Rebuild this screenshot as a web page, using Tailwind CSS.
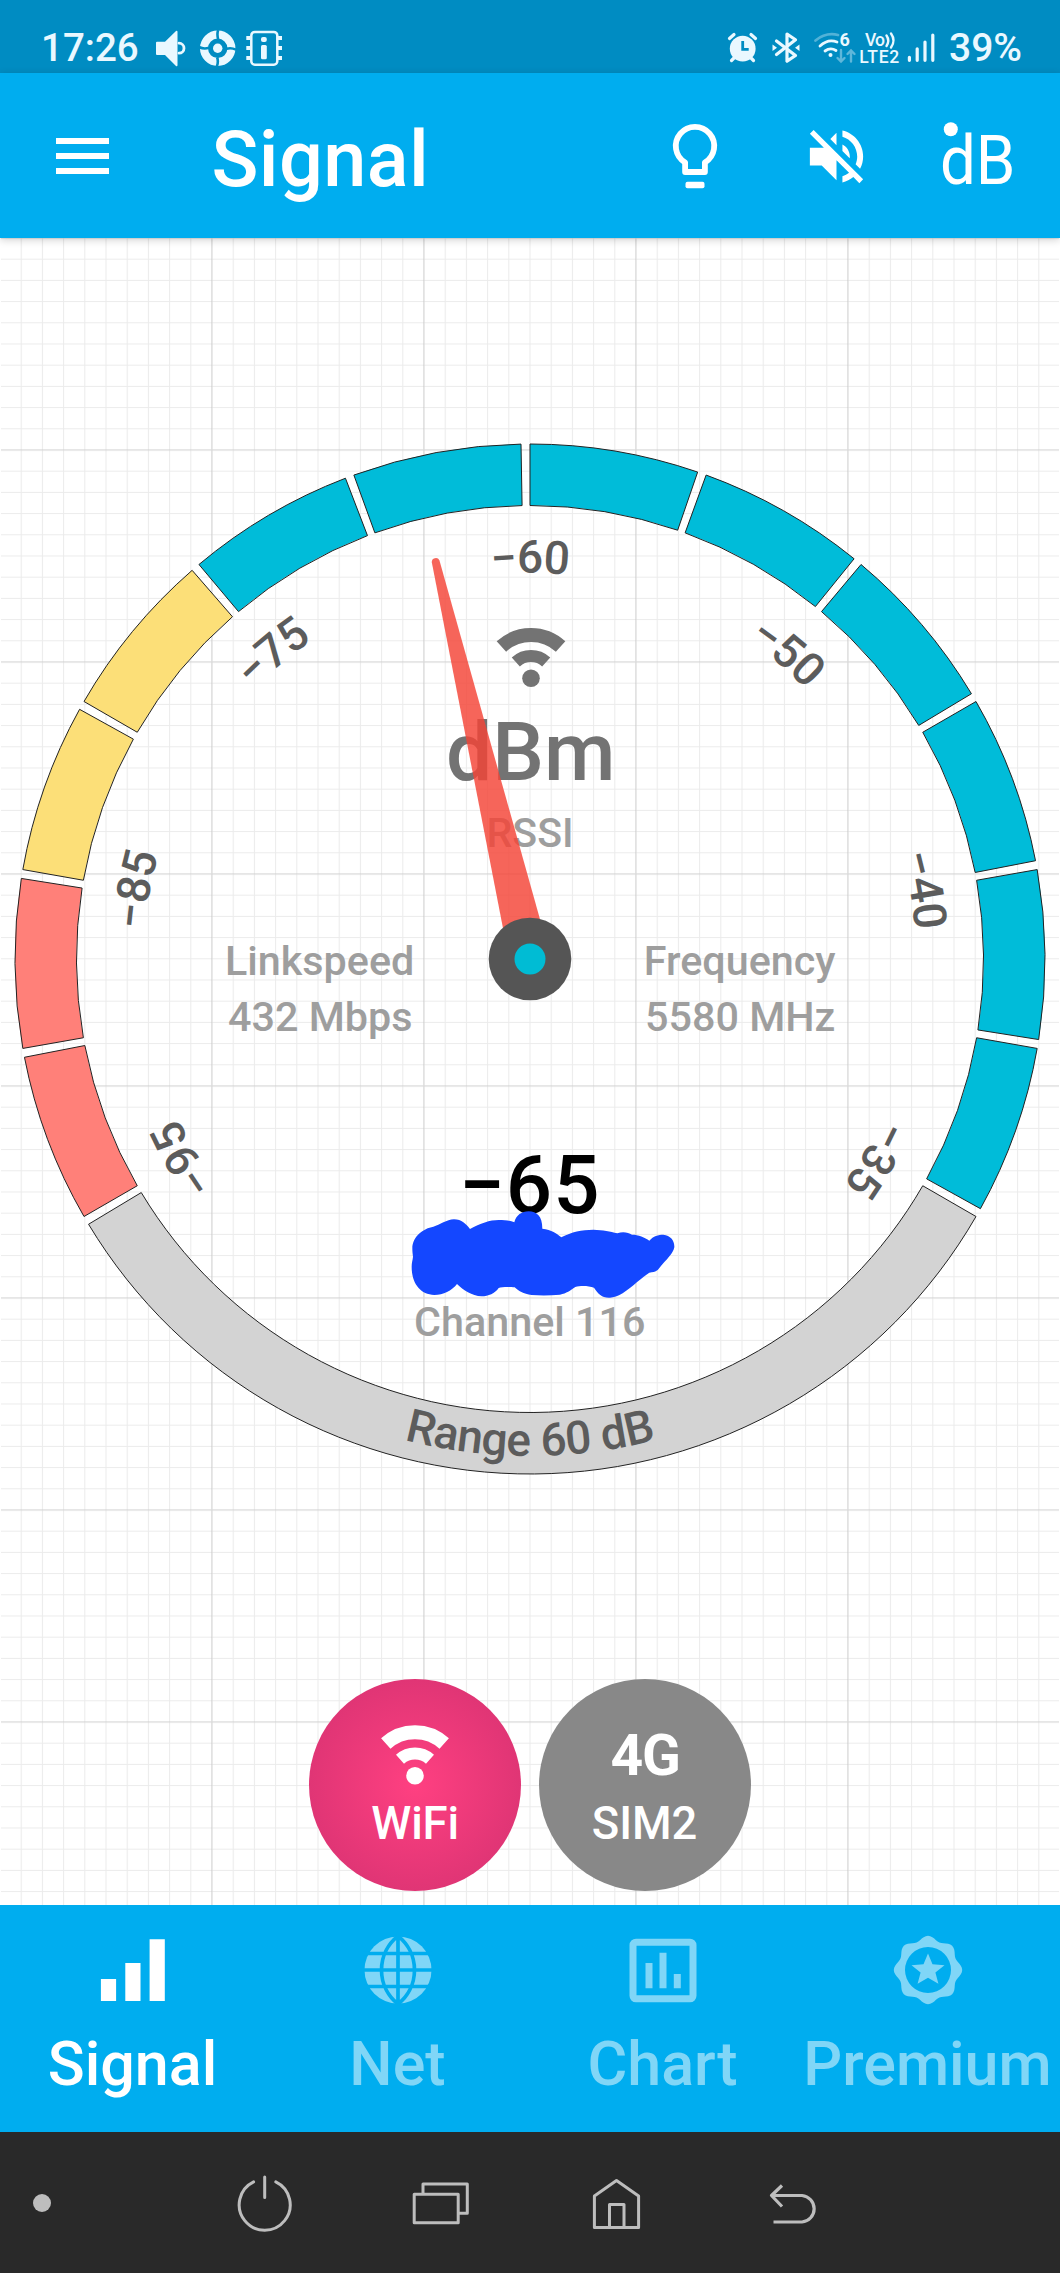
<!DOCTYPE html>
<html lang="en">
<head>
<meta charset="utf-8">
<title>Signal</title>
<script src="https://cdn.jsdelivr.net/npm/@tailwindcss/browser@4"></script>
</head>
<body class="w-[1060px] bg-white font-['Roboto',sans-serif] font-medium">
<div class="flex h-[2273px] w-[1060px] flex-col overflow-hidden">

  <!-- status bar -->
  <div class="flex h-[73px] shrink-0 items-start justify-between bg-[#008cc2] pl-[41px] pr-[38px] text-[#eaf8ff]">
    <div class="flex">
      <span class="mt-[24px] w-[98px] text-[38.5px] leading-[48px] whitespace-nowrap">17:26</span>
      <svg class="mt-[27px] ml-[17px] h-[42px] w-[30px]" viewBox="156 27 30 42" fill="currentColor">
        <path d="M157 41.700h8L176 31q1.500-.7 1.500 1V65q0 1.700-1.500 1L165 55h-8q-1 0-1-1V42.700q0-1 1-1z"/>
        <path d="M179 43.200a5 5 0 0 1 0 10" fill="none" stroke="currentColor" stroke-width="2.800" stroke-linecap="round"/>
      </svg>
      <svg class="mt-[27px] ml-[13px] h-[42px] w-[38px]" viewBox="199 27 38 42">
        <circle cx="217.700" cy="48.300" r="13.700" fill="none" stroke="currentColor" stroke-width="8"/>
        <path d="M218.200 39.500Q216.700 34 218.200 30M217.200 57.500Q218.700 62 216.700 67M209 47.800Q204 49.300 199.500 47.300M226.500 48.800Q231 47.300 236 49.600" fill="none" stroke="#008cc2" stroke-width="2.600"/>
        <circle cx="217.700" cy="48.300" r="4.700" fill="currentColor"/>
      </svg>
      <svg class="mt-[27px] ml-[8px] h-[42px] w-[38px]" viewBox="245 27 38 42" fill="currentColor">
        <rect x="251.300" y="31.900" width="26" height="32.800" rx="3.500" fill="none" stroke="currentColor" stroke-width="2.500"/>
        <path d="M246.300 36h4v4h-4zM246.300 46h4v4h-4zM246.300 56h4v4h-4zM278 36h4v4h-4zM278 46h4v4h-4zM278 56h4v4h-4z"/>
        <rect x="261" y="37" width="5.800" height="5" rx="2"/><rect x="261" y="45" width="5.800" height="14.300" rx="1.500"/>
      </svg>
    </div>
    <div class="flex">
      <svg class="mt-[27px] h-[42px] w-[34px]" viewBox="726 27 34 42">
        <g stroke="currentColor" stroke-width="3.200" stroke-linecap="round">
          <path d="M729.500 38.500l4.500-4M755.500 38.500l-4.500-4M731.500 60.500l3-3M753.500 60.500l-3-3"/>
        </g>
        <circle cx="742.700" cy="48.700" r="12.900" fill="currentColor"/>
        <path d="M742.700 41v8.300h6" fill="none" stroke="#008cc2" stroke-width="2.800"/>
      </svg>
      <svg class="mt-[27px] ml-[10px] h-[42px] w-[32px]" viewBox="770 27 32 42" fill="currentColor">
        <path d="M776.500 41L795.500 55.500 787 61.200V34L795.500 39.800 776.500 54.500" fill="none" stroke="currentColor" stroke-width="3.200" stroke-linecap="round" stroke-linejoin="round"/>
        <path d="M772.500 44.500l4.500 3.200-4.500 3.200zM799.500 44.500l-4.500 3.200 4.500 3.200z"/>
      </svg>
      <svg class="mt-[27px] ml-[10px] h-[42px] w-[46px]" viewBox="812 27 46 42">
        <g fill="none" stroke="currentColor" stroke-width="2.800" stroke-linecap="round">
          <path d="M815.500 40.500Q826 32 838 35" opacity=".35"/>
          <path d="M820 46Q828 38.500 837 42"/>
          <path d="M825 51Q830.500 47 836 50.500"/>
          <path d="M841 50v11M837.500 58l3.500 3.500 3.500-3.500M851 61.500V50.500M847.500 54l3.500-3.500 3.500 3.500" opacity=".4" stroke-width="2.400"/>
        </g>
        <circle cx="830.500" cy="55" r="2" fill="currentColor"/>
        <text x="839.500" y="46.300" font-size="18" fill="currentColor" font-weight="700">6</text>
      </svg>
      <svg class="mt-[27px] ml-[1px] h-[42px] w-[42px]" viewBox="859 27 42 42" fill="currentColor">
        <text x="865" y="45.800" font-size="17.500" textLength="20">Vo</text>
        <path d="M886.500 35.500q3.500 5 0 10.500M891 33.500q5 7 0 14" fill="none" stroke="currentColor" stroke-width="2.400" stroke-linecap="round"/>
        <text x="859.300" y="62.700" font-size="17.500" textLength="40">LTE2</text>
      </svg>
      <svg class="mt-[27px] ml-[6px] h-[42px] w-[28px]" viewBox="907 27 28 42" stroke="currentColor" stroke-width="3.200" stroke-linecap="round">
        <path d="M909.400 57.300v3M917.200 48.800v11.500M925 42v18.300M932.800 35v25.300"/>
      </svg>
      <span class="mt-[24px] ml-[14px] w-[73px] text-[39px] leading-[48px] whitespace-nowrap">39%</span>
    </div>
  </div>

  <!-- app bar -->
  <header class="z-10 flex h-[165px] shrink-0 items-start bg-[#00adef] pl-14 text-white shadow-[0_2px_8px_rgba(0,0,0,0.18)]">
    <div class="mt-[65px] flex w-[53px] flex-col gap-[9px]">
      <span class="h-1.5 bg-white"></span><span class="h-1.5 bg-white"></span><span class="h-1.5 bg-white"></span>
    </div>
    <svg class="ml-[101px] mt-[40px] h-[100px] w-[230px]" viewBox="210 113 230 100" fill="currentColor">
      <text x="211.500" y="186" font-size="77.500" letter-spacing=".4">Signal</text>
    </svg>
    <svg class="ml-[230px] mt-[47px] h-[72px] w-[50px]" viewBox="670 120 50 72" fill="none" stroke="currentColor" stroke-width="5.800">
      <path d="M704.900 172V162.500a19.200 19.200 0 1 0-19.800 0V172z" stroke-linejoin="round"/>
      <rect x="685.500" y="181.700" width="19" height="6.500" rx="2" fill="currentColor" stroke="none"/>
    </svg>
    <svg class="ml-[81px] mt-[47.500px] h-[71px] w-[71px]" viewBox="0 0 24 24" fill="currentColor">
      <path d="M16.500 12c0-1.770-1.020-3.290-2.500-4.030v2.210l2.450 2.450c.030-.2.050-.41.050-.63zm2.500 0c0 .94-.2 1.820-.54 2.640l1.510 1.510C20.630 14.910 21 13.500 21 12c0-4.280-2.990-7.860-7-8.770v2.060c2.890.86 5 3.540 5 6.710zM4.270 3L3 4.270 7.730 9H3v6h4l5 5v-6.730l4.250 4.250c-.67.52-1.420.93-2.250 1.180v2.060c1.380-.31 2.630-.95 3.690-1.810L19.730 21 21 19.730l-9-9L4.270 3zM12 4L9.910 6.090 12 8.180V4z"/>
    </svg>
    <svg class="ml-[64px] mt-[32px] h-[110px] w-[84px]" viewBox="936 105 84 110" fill="currentColor">
      <circle cx="950.800" cy="129.300" r="7"/>
      <text x="940" y="184.300" font-size="69" font-weight="400" textLength="75.500" lengthAdjust="spacingAndGlyphs">dB</text>
    </svg>
  </header>

  <main class="relative flex h-[1667px] shrink-0 flex-col">
    <svg class="absolute inset-0 h-full w-full" viewBox="0 238.300 1060 1667">
      <defs>
        <pattern id="minor" width="21.200" height="21.200" patternUnits="userSpaceOnUse" x="-.5" y="237.800"><path d="M0 .5H21.200M.5 0V21.200" stroke="#000" stroke-opacity=".08"/></pattern>
        <pattern id="major" width="212" height="212" patternUnits="userSpaceOnUse" x="-1" y="237.500"><path d="M0 .8H212M.8 0V212" stroke="#000" stroke-opacity=".08" stroke-width="1.600"/></pattern>
      </defs>
      <rect y="238" width="1060" height="1668" fill="#fff"/>
      <rect y="238" x="1" width="1058" height="1668" fill="url(#minor)"/>
      <rect y="238" x="1" width="1058" height="1668" fill="url(#major)"/>
    </svg>

    <!-- gauge -->
    <svg class="relative mt-[191px] h-[1060px] w-[1060px] shrink-0" viewBox="0 429 1060 1060">
      <defs>
        <path id="range" d="M33 959A497 497 0 0 0 1027 959"/>
      </defs>
      <g id="ring" stroke="#222" stroke-width="1"></g>
      <g id="ticks" font-size="46" fill="#5c5c5c" text-anchor="middle" letter-spacing="-.5"></g>
      <text font-size="46" fill="#5c5c5c" text-anchor="middle" letter-spacing="-.5"><textPath href="#range" startOffset="50%">Range 60 dB</textPath></text>

      <g fill="none" stroke="#737373">
        <path d="M501.400 646.500A43.800 43.800 0 0 1 560.600 646.500" stroke-width="14"/>
        <path d="M515.800 662A22.500 22.500 0 0 1 546.200 662" stroke-width="12"/>
        <circle cx="531" cy="678.300" r="8.800" fill="#737373" stroke="none"/>
      </g>
      <text x="446" y="780" font-size="82" fill="#737373">dBm</text>
      <g font-size="41.300" fill="#9e9e9e">
        <text x="486.500" y="846.700" font-size="41">RSSI</text>
        <text x="225" y="974.700">Linkspeed</text>
        <text x="228" y="1031">432 Mbps</text>
        <text x="643.800" y="974.700">Frequency</text>
        <text x="645" y="1031">5580 MHz</text>
        <text x="414" y="1335.700">Channel 116</text>
      </g>
      <text x="459" y="1213" font-size="81.500" fill="#000" letter-spacing="1">−65</text>

      <path d="M431.800 562.300A4 4 0 0 1 439.400 560.300L550 955 509 959z" fill="#f44336" fill-opacity=".82"/>
      <circle cx="530" cy="959" r="41.300" fill="#555"/>
      <circle cx="530" cy="959" r="15.500" fill="#00bcd4"/>

      <path transform="translate(380 1140) scale(.33333)" fill="#1447ff" d="M97 325C97 290 130 265 160 260C180 255 200 238 222 238C245 238 258 252 270 267C300 250 330 240 356 240C375 240 392 242 403 247C408 225 425 215 446 214C470 215 487 228 487 266C515 270 530 280 544 292C575 275 605 270 640 269C670 270 690 274 712 280C730 274 745 278 756 284C775 284 795 292 808 302C820 288 835 284 850 284C872 286 884 302 883 322C880 340 860 358 838 384C830 396 820 396 808 398C785 412 760 438 728 460C710 470 700 474 686 473C665 473 655 462 642 443C625 437 600 437 586 441C570 452 560 460 540 464C510 467 480 467 455 465C430 462 415 452 404 442C390 440 365 440 356 444C345 460 325 469 305 469C275 468 250 450 231 432C215 452 190 465 163 465C120 463 95 430 95 380C95 368 98 360 99 350C98 342 97 335 97 325z"/>
    </svg>

    <!-- source buttons -->
    <div class="relative mt-[190px] flex justify-center gap-[18px]">
      <svg class="h-[212px] w-[212px]" viewBox="309.200 1679 212 212">
        <defs><radialGradient id="pink"><stop offset="0" stop-color="#ff4081"/><stop offset="1" stop-color="#e03575"/></radialGradient></defs>
        <circle cx="415.200" cy="1785" r="106" fill="url(#pink)"/>
        <g fill="none" stroke="#fff">
          <path d="M386 1743.500A43.500 43.500 0 0 1 444.400 1743.500" stroke-width="14"/>
          <path d="M400.200 1759.200A22.500 22.500 0 0 1 430.200 1759.200" stroke-width="12"/>
        </g>
        <circle cx="415.200" cy="1775.700" r="8.800" fill="#fff"/>
        <text x="371.500" y="1839" font-size="45.500" fill="#fff" letter-spacing="-.2">WiFi</text>
      </svg>
      <svg class="h-[212px] w-[212px]" viewBox="538.800 1679 212 212" fill="#fff">
        <circle cx="644.800" cy="1785" r="106" fill="#888"/>
        <text x="610.200" y="1775" font-size="57" font-weight="700" letter-spacing="-1">4G</text>
        <text x="591.500" y="1839" font-size="45.300">SIM2</text>
      </svg>
    </div>
  </main>

  <!-- tabs -->
  <nav class="grid h-[227px] shrink-0 grid-cols-4 bg-[#00adef] text-[61px] leading-[72px] text-white">
    <div class="flex flex-col items-center pt-[30px]">
      <svg class="h-[70px] w-[70px]" viewBox="97.500 1935 70 70" fill="currentColor"><path d="M100.400 1979h15.200v22h-15.200zM124.800 1963H140v38h-15.200zM149.100 1939.300h15.200V2001h-15.200z"/></svg>
      <span class="mt-[23px]">Signal</span>
    </div>
    <div class="flex flex-col items-center pt-[30px] text-[#80d6f7]">
      <svg class="h-[70px] w-[70px]" viewBox="-35 -35 70 70">
        <circle r="33.500" fill="currentColor"/>
        <path d="M0-35V35M-35 0H35M-35-16.500H35M-35 16.500H35M0-34A43.300 43.300 0 0 1 0 34A43.300 43.300 0 0 1 0-34" fill="none" stroke="#00adef" stroke-width="3.700"/>
      </svg>
      <span class="mt-[23px]">Net</span>
    </div>
    <div class="flex flex-col items-center pt-[30px] text-[#80d6f7]">
      <svg class="h-[70px] w-[70px]" viewBox="627.500 1935 70 70" fill="currentColor">
        <rect x="632.500" y="1942.200" width="60" height="56.600" rx="3" fill="none" stroke="currentColor" stroke-width="7"/>
        <path d="M645 1963h7v25.300h-7zM659 1952.700h7v35.600h-7zM673.300 1974h7v14.300h-7z"/>
      </svg>
      <span class="mt-[23px]">Chart</span>
    </div>
    <div class="flex flex-col items-center pt-[30px] text-[#80d6f7]">
      <svg class="h-[70px] w-[70px]" viewBox="-35 -35 70 70" fill="currentColor">
        <path id="badge" fill-rule="evenodd"/>
        <path d="M0-16.500L4.500-5.700 16.500-4.700 7.400 2.500 10.400 13.800 0 7.700 -10.400 13.800-7.400 2.500 -16.500-4.700-4.500-5.700z"/>
      </svg>
      <span class="mt-[23px]">Premium</span>
    </div>
  </nav>

  <!-- system navigation -->
  <footer class="flex h-[141px] shrink-0 items-start bg-[#292929] pl-[33px] pt-[40px] text-[#bdbdbd]">
    <span class="mt-[22px] h-[18px] w-[18px] rounded-full bg-[#bdbdbd]"></span>
    <svg class="ml-[184px] h-[62px] w-[60px]" viewBox="235 2172 60 62" fill="none" stroke="currentColor" stroke-width="3" stroke-linecap="round"><path d="M253.600 2181.800A25.500 25.500 0 1 0 275.800 2181.800M264.700 2177V2197.500"/></svg>
    <svg class="ml-[115px] h-[62px] w-[62px]" viewBox="410 2172 62 62" fill="none" stroke="currentColor" stroke-width="3" stroke-linejoin="round"><path d="M423 2194V2184H467.300V2213.300H458M414.200 2194.200H458.200V2222.800H414.200z"/></svg>
    <svg class="ml-[116px] h-[62px] w-[58px]" viewBox="588 2172 58 62" fill="none" stroke="currentColor" stroke-width="3" stroke-linejoin="round"><path d="M616.500 2180.500L638.600 2196V2227.500H594.400V2196zM609.500 2227.500V2204.500H624V2227.500"/></svg>
    <svg class="ml-[118.500px] h-[62px] w-[56px]" viewBox="765 2172 56 62" fill="none" stroke="currentColor" stroke-width="3.200"><path d="M782 2185.500L771.500 2195.500 782 2206.500M771.500 2195.500H802A13.300 13.300 0 0 1 802 2222H773.500" stroke-linejoin="round"/></svg>
  </footer>
</div>

<script>
  const NS = 'http://www.w3.org/2000/svg', CX = 530, CY = 959, RO = 515, RI = 453.500;
  const pt = (r, a) => { const t = a * Math.PI / 180; return (CX + r * Math.cos(t)).toFixed(2) + ' ' + (CY + r * Math.sin(t)).toFixed(2); };
  const ring = document.getElementById('ring');
  const addSegment = (a, b, fill) => {
    const p = document.createElementNS(NS, 'path');
    p.setAttribute('d', `M${pt(RO, a)}A${RO} ${RO} 0 0 1 ${pt(RO, b)}L${pt(RI, b)}A${RI} ${RI} 0 0 0 ${pt(RI, a)}z`);
    p.setAttribute('fill', fill);
    ring.appendChild(p);
  };
  for (let i = 0; i < 12; i++) addSegment(150 + 20 * i, 169 + 20 * i, i < 2 ? '#ff8079' : i < 4 ? '#fcdf78' : '#00bcd9');
  addSegment(30, 149, '#d3d3d3');

  // Scale labels follow the inside of the ring.
  const ticks = document.getElementById('ticks'), R = 386;
  ['95', '85', '75', '60', '50', '40', '35'].forEach((v, i) => {
    const a = 150 + 40 * i, p = document.createElementNS(NS, 'path');
    p.setAttribute('id', 'arc' + v);
    p.setAttribute('fill', 'none');
    p.setAttribute('d', `M${pt(R, a - 30)}A${R} ${R} 0 0 1 ${pt(R, a + 30)}`);
    const t = document.createElementNS(NS, 'text'), tp = document.createElementNS(NS, 'textPath');
    tp.setAttribute('href', '#arc' + v);
    tp.setAttribute('startOffset', '50%');
    tp.textContent = '\u2212' + v;
    t.appendChild(tp);
    ticks.append(p, t);
  });

  // Scalloped rim of the badge, eight lobes.
  let d = '';
  for (let i = 0; i < 96; i++) {
    const a = i / 96 * 2 * Math.PI, r = 32 + 2.200 * Math.cos(8 * a);
    d += (i ? 'L' : 'M') + (r * Math.cos(a)).toFixed(2) + ' ' + (r * Math.sin(a)).toFixed(2);
  }
  document.getElementById('badge').setAttribute('d', d + 'zM23 0A23 23 0 1 0-23 0A23 23 0 1 0 23 0z');
</script>
</body>
</html>
